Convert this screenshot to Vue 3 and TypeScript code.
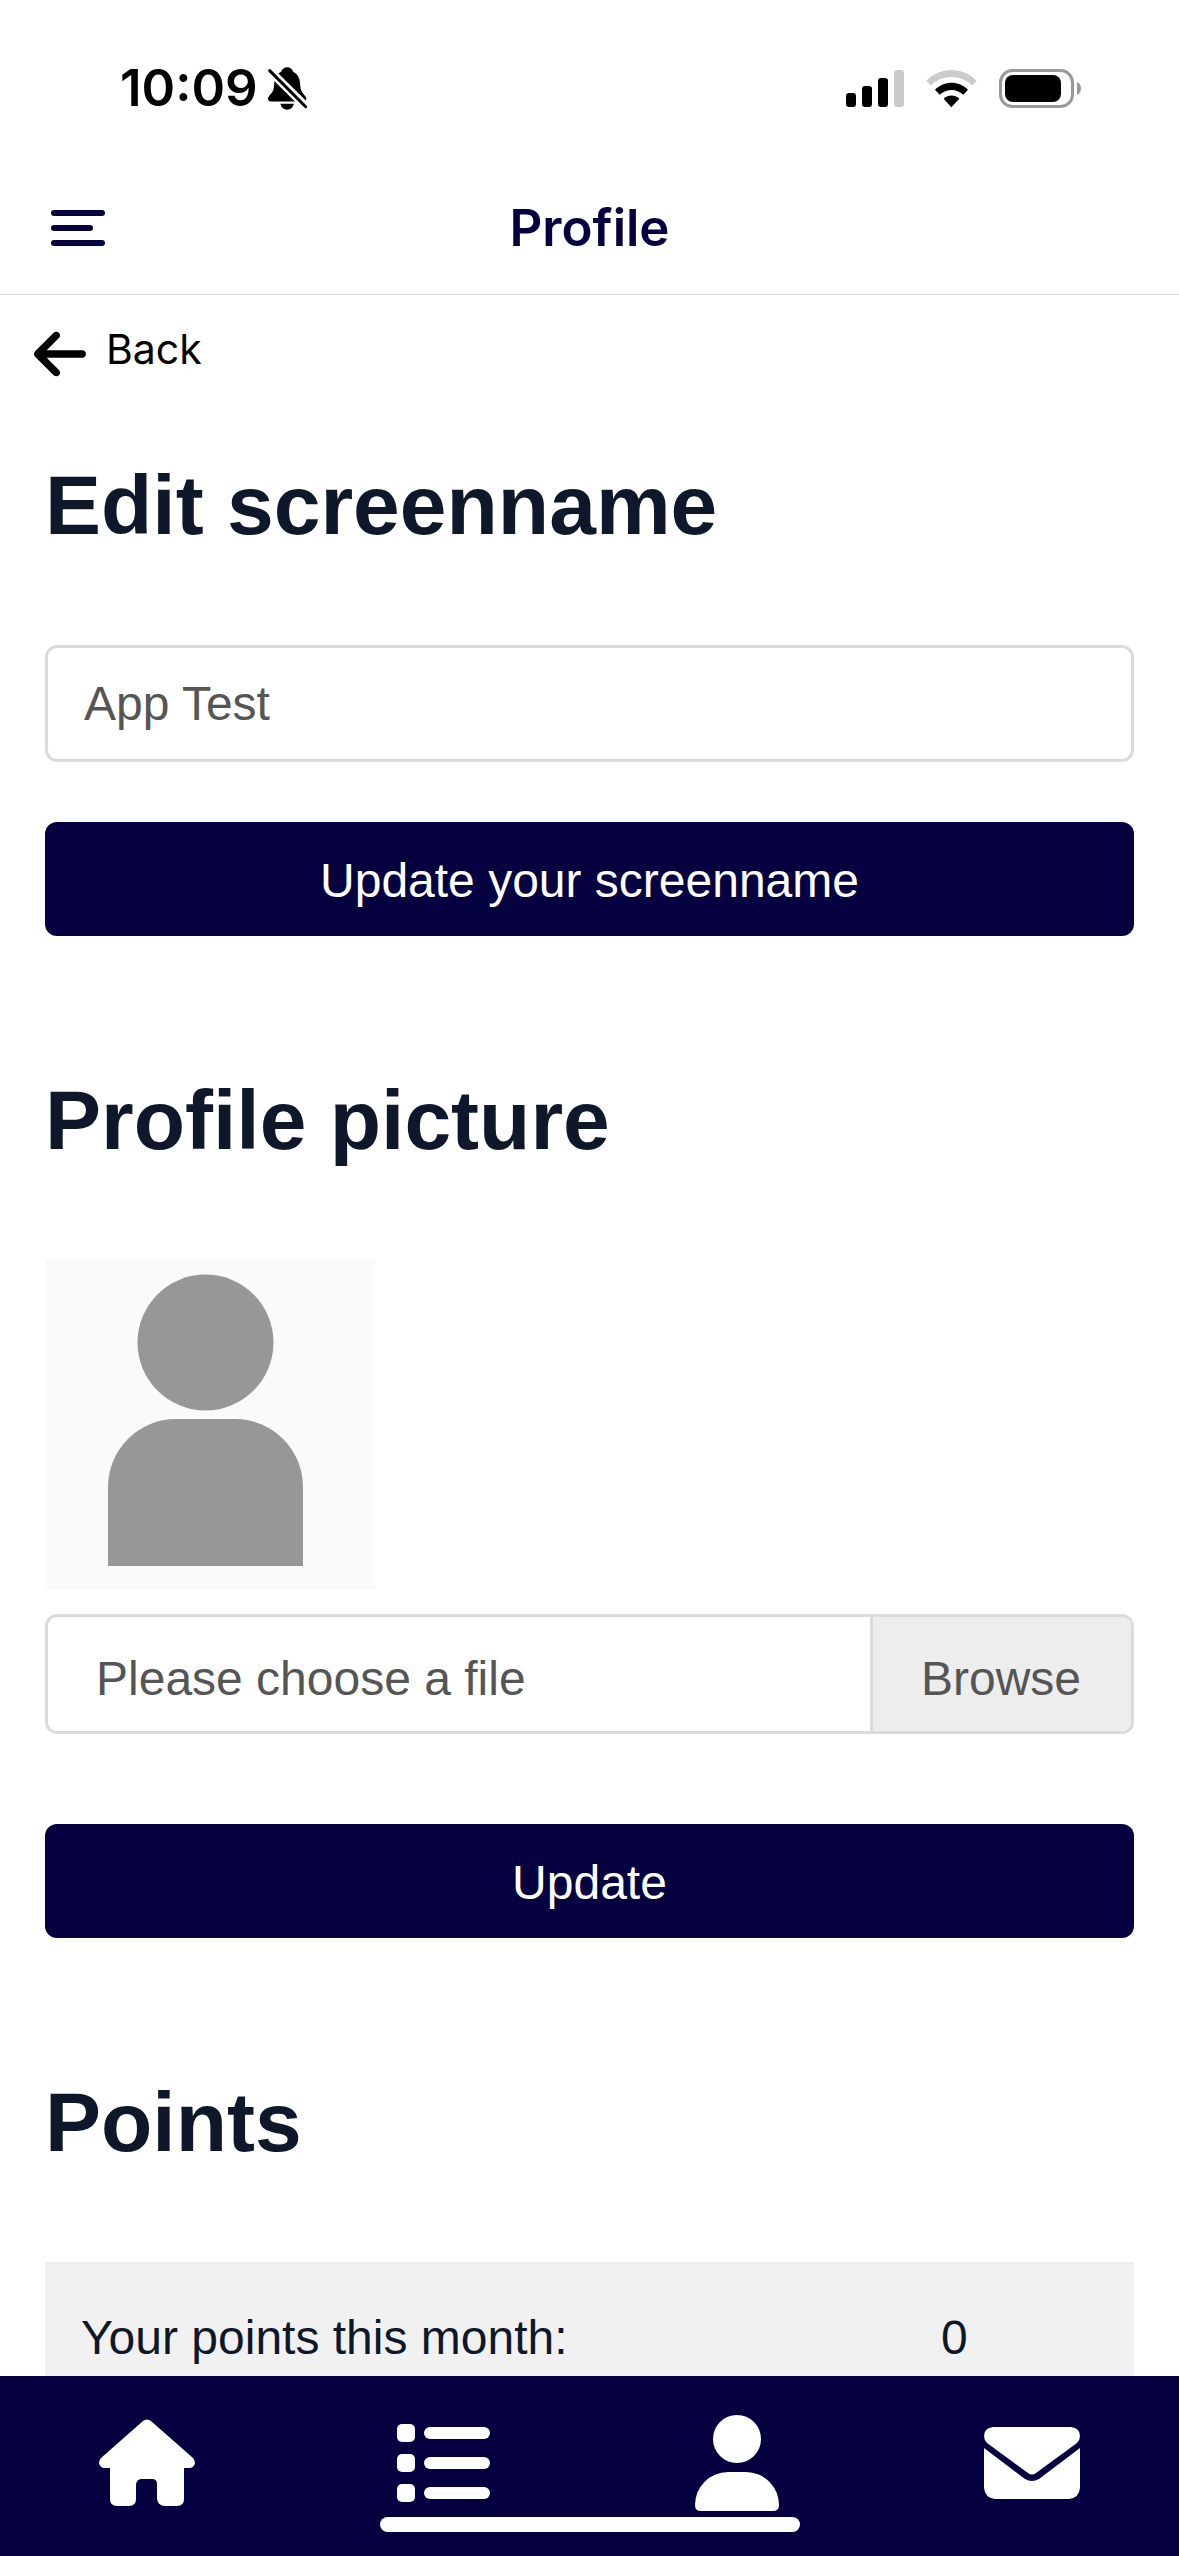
<script setup lang="ts">
import { ref } from 'vue'

const screenname = ref<string>('App Test')
const fileName = ref<string>('Please choose a file')
const points = ref<number>(0)

function onFile(event: Event): void {
  const file = (event.target as HTMLInputElement).files?.[0]
  if (file) fileName.value = file.name
}
</script>

<template>
  <div class="app">
    <div class="status">
      <div class="clock">
        <span>10:09</span>
        <svg class="bell" viewBox="800 78 124 134" aria-hidden="true">
          <path d="M861 81C852 81 846 86 843 94C828 101 823 114 822 128C821 148 818 155 810 163C805 168 803 173 803 176C803 181 807 184 812 184H910C916 184 919 181 919 176C919 170 914 166 909 160C903 152 901 146 900 130C899 113 893 101 879 94C876 86 870 81 861 81Z" />
          <path d="M841 191H881C879 203 870 209 861 209S843 203 841 191Z" />
          <path d="M796 79L930 212" stroke="#fff" stroke-width="25" />
          <path d="M808 91L917 200" stroke="#000" stroke-width="9" stroke-linecap="round" />
        </svg>
      </div>
      <div class="signals">
        <svg class="cell" viewBox="0 0 58 37" aria-hidden="true">
          <rect x="0" y="23" width="10" height="14" rx="3" />
          <rect x="16" y="16" width="10" height="21" rx="3" />
          <rect x="32" y="8" width="10" height="29" rx="3" />
          <rect x="48" y="0" width="10" height="37" rx="3" fill="#cbcbcb" />
        </svg>
        <svg class="wifi" viewBox="438 84 153 116" aria-hidden="true">
          <path d="M439 119C481 76 548 76 590 119L577 133C541 99 488 99 452 133Z" fill="#cbcbcb" />
          <path d="M465 146C493 118 536 118 564 146L550 161C529 142 500 142 479 161Z" />
          <path d="M491 173C505 160 524 160 538 173L514 198Z" />
        </svg>
        <svg class="battery" viewBox="0 0 83 39" aria-hidden="true">
          <rect x="1.5" y="1.5" width="72" height="36" rx="12" fill="none" stroke="#999" stroke-width="3" />
          <rect x="6" y="6" width="56" height="27" rx="8" />
          <path d="M78 13Q82 15 82 19.500T78 26Z" fill="#999" />
        </svg>
      </div>
    </div>

    <header class="topbar">
      <button class="menu" type="button" aria-label="Menu">
        <svg viewBox="0 0 54 36" aria-hidden="true">
          <rect width="54" height="6" rx="3" />
          <rect y="15" width="42" height="6" rx="3" />
          <rect y="30" width="54" height="6" rx="3" />
        </svg>
      </button>
      <h1>Profile</h1>
    </header>

    <main class="content">
      <a class="back" href="#back">
        <svg viewBox="0 64 448 384" aria-hidden="true">
          <path d="M9.400 233.400c-12.500 12.500-12.500 32.800 0 45.300l160 160c12.500 12.500 32.800 12.500 45.300 0s12.500-32.800 0-45.300L109.200 288H416c17.700 0 32-14.300 32-32s-14.300-32-32-32H109.300L214.600 118.600c12.500-12.500 12.500-32.800 0-45.300s-32.800-12.500-45.300 0l-160 160z" />
        </svg>
        <span>Back</span>
      </a>

      <form class="section" @submit.prevent>
        <h2><label for="screenname">Edit screenname</label></h2>
        <input id="screenname" v-model="screenname" class="field" type="text" />
        <button class="primary after-field" type="submit">Update your screenname</button>
      </form>

      <form class="section" @submit.prevent>
        <h2>Profile picture</h2>
        <svg class="avatar" viewBox="0 0 330 330" role="img" aria-label="Profile picture placeholder">
          <rect width="330" height="330" fill="#fafafa" />
          <circle cx="160.500" cy="82.500" r="68" />
          <path d="M63 306V227A68 68 0 0 1 131 159H190A68 68 0 0 1 258 227V306Z" />
        </svg>
        <label class="file">
          <input type="file" @change="onFile" />
          <span class="file-name">{{ fileName }}</span>
          <span class="browse">Browse</span>
        </label>
        <button class="primary after-file" type="submit">Update</button>
      </form>

      <section class="section">
        <h2>Points</h2>
        <table class="points">
          <tbody>
            <tr>
              <th scope="row">Your points this month:</th>
              <td>{{ points }}</td>
            </tr>
          </tbody>
        </table>
      </section>
    </main>

    <nav class="tabs">
      <a href="#home" aria-label="Home">
        <svg viewBox="0 0 96 96" aria-hidden="true">
          <path d="M44 6Q48 3 52 6L94 43Q96 45 96 48Q95 53 90 53H85V84Q85 91 78 91H66Q59 91 58 84V69Q58 64 53 64H43Q38 64 37 69V84Q37 91 30 91H18Q11 91 11 84V53H6Q1 53 0 48Q0 45 2 43Z" />
        </svg>
      </a>
      <a href="#list" aria-label="List">
        <svg viewBox="0 0 96 96" aria-hidden="true">
          <rect x="3" y="9" width="18" height="18" rx="5" />
          <rect x="3" y="39" width="18" height="18" rx="5" />
          <rect x="3" y="69" width="18" height="18" rx="5" />
          <rect x="30" y="12" width="66" height="12" rx="6" />
          <rect x="30" y="42" width="66" height="12" rx="6" />
          <rect x="30" y="72" width="66" height="12" rx="6" />
        </svg>
      </a>
      <a href="#profile" aria-label="Profile">
        <svg viewBox="0 0 96 96" aria-hidden="true">
          <circle cx="48" cy="24" r="24" />
          <path d="M6 90A33 33 0 0 1 39 57H57A33 33 0 0 1 90 90Q90 96 84 96H12Q6 96 6 90Z" />
        </svg>
      </a>
      <a href="#messages" aria-label="Messages">
        <svg viewBox="0 0 96 96" aria-hidden="true">
          <path d="M9 12H87Q96 13 96 21Q96 25 93 28L52 58Q48 61 44 58L3 28Q0 25 0 21Q0 13 9 12Z" />
          <path d="M0 33L41 64Q48 68 55 64L96 33V73Q95 83 85 84H11Q1 83 0 73Z" />
        </svg>
      </a>
      <div class="indicator"></div>
    </nav>
  </div>
</template>

<style>
body {
  background: #fff;
}
</style>

<style scoped>
.app {
  display: flex;
  flex-direction: column;
  height: 100vh;
  background: #fff;
  color: #0f172a;
  font-family: 'Liberation Sans', Arial, sans-serif;
}

.app *,
.app {
  box-sizing: border-box;
}

svg {
  display: block;
  flex: none;
}

.status {
  display: flex;
  flex: none;
  align-items: center;
  justify-content: space-between;
  height: 162px;
  padding: 14px 97px 0 120px;
  color: #000;
}

.clock {
  display: flex;
  align-items: center;
  gap: 9px;
  font: 600 51px/60px Inter, sans-serif;
}

.bell {
  width: 41px;
  height: 45px;
}

.signals {
  display: flex;
  align-items: center;
  gap: 22px;
}

.cell {
  width: 58px;
  height: 37px;
}

.wifi {
  width: 51px;
  height: 39px;
}

.battery {
  width: 83px;
  height: 39px;
}

.topbar {
  display: grid;
  flex: none;
  grid-template-columns: 1fr auto 1fr;
  align-items: center;
  height: 133px;
  padding: 0 51px;
  border-bottom: 1px solid #d8d8d8;
  color: #050040;
}

.topbar h1 {
  margin: 0;
  font: 600 51px/60px Inter, sans-serif;
}

.menu {
  justify-self: start;
  padding: 0;
  border: 0;
  background: none;
  color: inherit;
}

.menu svg {
  width: 54px;
  height: 36px;
  fill: currentColor;
}

.content {
  flex: 1;
  min-height: 0;
  padding: 33px 45px 0;
  overflow-y: auto;
  scrollbar-width: none;
}

.back {
  display: flex;
  align-items: center;
  width: fit-content;
  height: 52px;
  margin-left: -11px;
  gap: 20px;
  color: #000;
  font: 400 41px/42px Inter, sans-serif;
  text-decoration: none;
}

.back svg {
  width: 52px;
  height: 46px;
}

.back span {
  padding-bottom: 10px;
}

.section {
  display: flex;
  flex-direction: column;
  margin-top: 77px;
}

.section + .section {
  margin-top: 136px;
}

h2 {
  margin: 0 0 92px;
  font-size: 84px;
  font-weight: 700;
  line-height: 96px;
}

.field {
  width: 100%;
  height: 117px;
  padding: 0 36px;
  border: 3px solid #dbdbdb;
  border-radius: 12px;
  background: #fff;
  color: #555;
  font: inherit;
  font-size: 48px;
}

.primary {
  width: 100%;
  height: 114px;
  padding: 2px 0 0;
  border: 0;
  border-radius: 12px;
  background: #050040;
  color: #fff;
  font: inherit;
  font-size: 48px;
}

.after-field {
  margin-top: 60px;
}

.after-file {
  margin-top: 90px;
}

.avatar {
  width: 330px;
  height: 330px;
  fill: #979799;
}

.file {
  position: relative;
  display: flex;
  height: 120px;
  margin-top: 24px;
  border: 3px solid #dbdbdb;
  border-radius: 12px;
  overflow: hidden;
  color: #555;
  font-size: 48px;
  line-height: 114px;
}

.file input {
  position: absolute;
  inset: 0;
  width: 100%;
  opacity: 0;
}

.file-name {
  flex: 1;
  padding: 5px 48px 0;
}

.browse {
  min-width: 261px;
  padding: 5px 48px 0;
  border-left: 3px solid #dbdbdb;
  background: #ededed;
}

.points {
  width: 100%;
  border-top: 3px solid #ededed;
  border-spacing: 0;
  background: #f1f1f1;
  font-size: 48px;
  line-height: 74px;
}

.points th,
.points td {
  padding: 36px;
  font-weight: 400;
}

.points th {
  width: 67%;
  text-align: left;
}

.points td {
  text-align: center;
}

.tabs {
  position: relative;
  display: grid;
  flex: none;
  grid-template-columns: repeat(4, 1fr);
  height: 180px;
  padding-top: 39px;
  background: #050040;
}

.tabs a {
  display: flex;
  justify-content: center;
  color: #fff;
}

.tabs svg {
  width: 96px;
  height: 96px;
  fill: currentColor;
}

.indicator {
  position: absolute;
  bottom: 24px;
  left: 50%;
  width: 420px;
  height: 15px;
  margin-left: -210px;
  border-radius: 8px;
  background: #fff;
}
</style>
